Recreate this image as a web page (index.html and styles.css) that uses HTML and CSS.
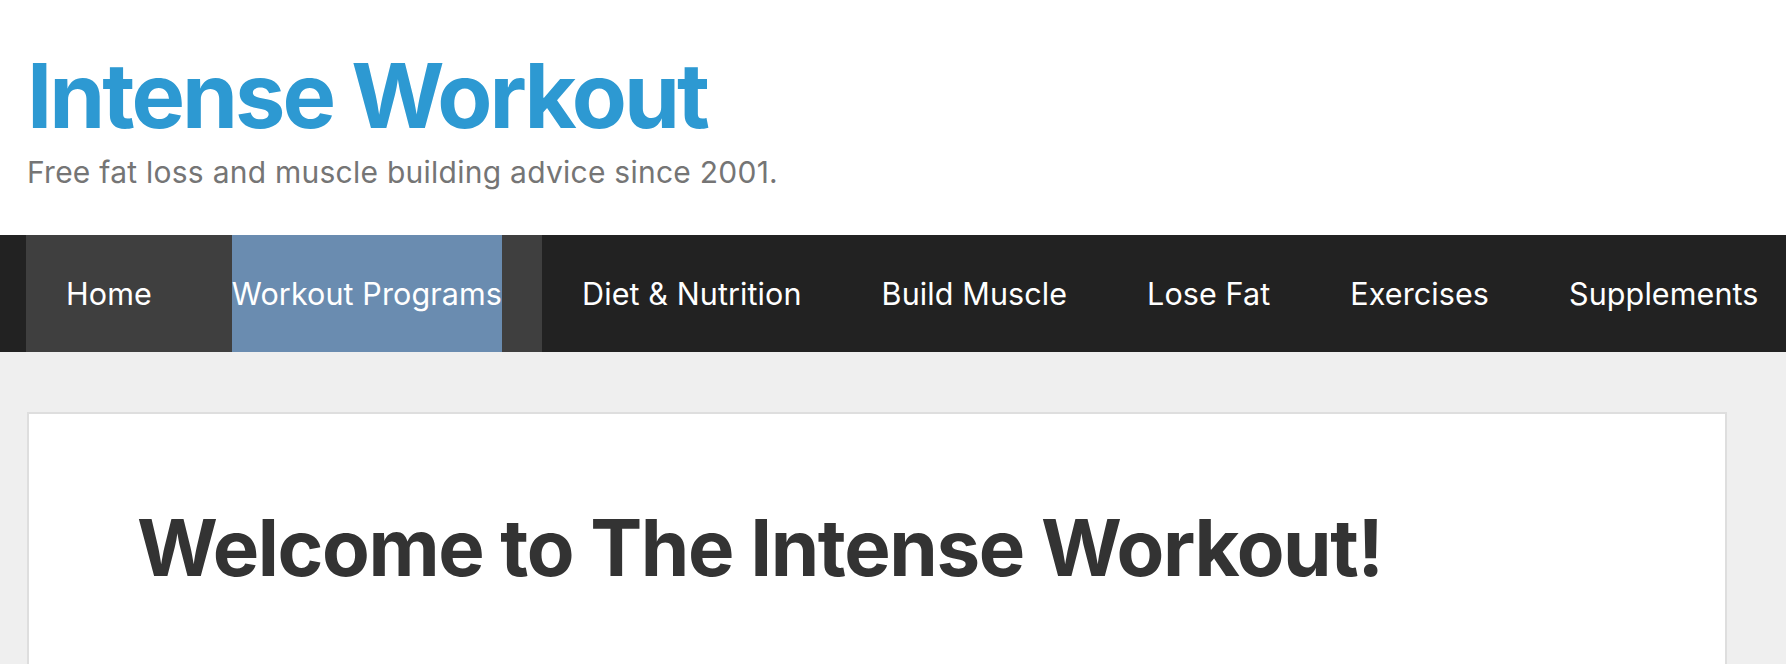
FILE: index.html
```html
<html>

    <head>
        <title>Intense Workout</title>
        <link rel="stylesheet" href="styles.css">
    </head>

    <body>
        <header class="site-header">
            <p class="main-title"><a href="#">Intense Workout</a></p>
            <p class="site-description">Free fat loss and muscle building advice since 2001.</p>
        </header>

        <nav class="main-nav">
            <ul class="menu">
                <li class="menu-item current"><a href="#">Home</a></li>
                <li class="menu-item current open"><a class="sub-active" href="#">Workout Programs</a></li>
                <li class="menu-item"><a href="#">Diet &amp; Nutrition</a></li>
                <li class="menu-item"><a href="#">Build Muscle</a></li>
                <li class="menu-item"><a href="#">Lose Fat</a></li>
                <li class="menu-item"><a href="#">Exercises</a></li>
                <li class="menu-item"><a href="#">Supplements</a></li>
            </ul>
        </nav>

        <div class="site-content">
            <article class="inside-article">
                <h1 class="entry-title">Welcome to The Intense Workout!</h1>
            </article>
        </div>
    </body>

</html>
```

FILE: styles.css
```css
body {
    font-family: Inter, "Noto Sans", sans-serif;
    background-color: #efefef;
    margin: 0;
    padding: 0;
    overflow: hidden;
}

a {
    text-decoration: none;
}

.site-header {
    background-color: white;
    padding: 42px 22px 40px 27px;
}

.main-title {
    margin: 0;
    font-size: 90px;
    font-weight: 700;
    line-height: 1.2;
    letter-spacing: -3px;
}

.main-title a {
    color: #2d99d2;
}

.site-description {
    margin: 0;
    font-size: 30px;
    line-height: 1.5;
    letter-spacing: 0.25px;
    color: #757575;
}

.main-nav {
    background-color: #222222;
    padding-left: 26px;
    overflow: hidden;
}

.main-nav .menu {
    display: flex;
    margin: 0;
    padding: 0;
    list-style: none;
    white-space: nowrap;
}

.main-nav .menu-item {
    flex-shrink: 0;
    padding: 0 40px;
    line-height: 117px;
    font-size: 30.5px;
    letter-spacing: 0.1px;
}

.main-nav .menu-item a {
    display: block;
    color: white;
}

.main-nav .current {
    background-color: #3f3f3f;
}

.main-nav .sub-active {
    background-color: #6a8cb0;
}

.site-content {
    padding: 60px 0 0 27px;
}

.inside-article {
    width: 1700px;
    height: 400px;
    background-color: white;
    border: 2px solid #dedede;
    padding: 87px 0 0 108px;
    box-sizing: border-box;
}

.entry-title {
    margin: 0;
    font-size: 78px;
    font-weight: 700;
    line-height: 1.2;
    letter-spacing: -1.4px;
    color: #333333;
}
```
